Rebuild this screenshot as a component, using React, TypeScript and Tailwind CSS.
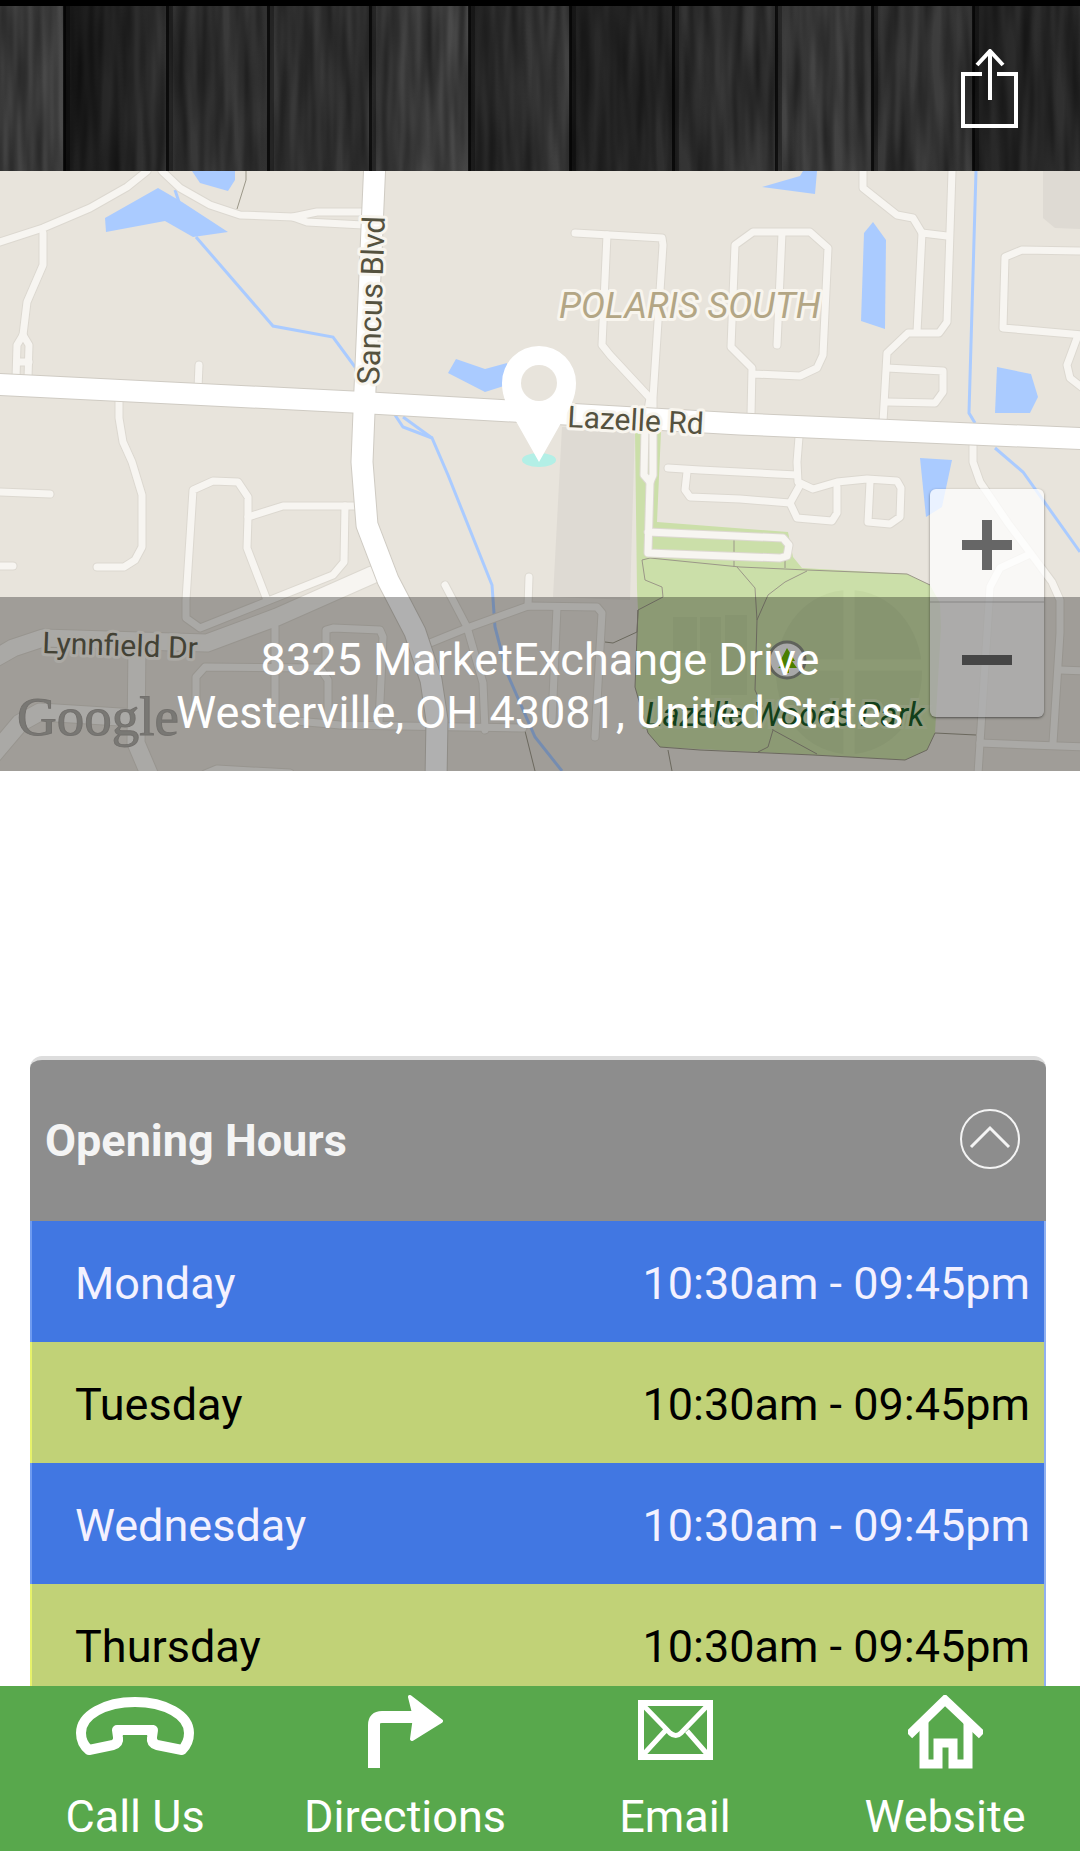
import React from "react";

const planks = [
  { x: 0, w: 64, from: "#444444", to: "#4b4b4b" },
  { x: 64, w: 103, from: "#1c1c1c", to: "#383838" },
  { x: 167, w: 101, from: "#363636", to: "#3d3d3d" },
  { x: 268, w: 102, from: "#383838", to: "#393939" },
  { x: 370, w: 99, from: "#3e3e3e", to: "#4d4d4d" },
  { x: 469, w: 101, from: "#282828", to: "#434343" },
  { x: 570, w: 103, from: "#272727", to: "#303030" },
  { x: 673, w: 103, from: "#333333", to: "#3c3c3c" },
  { x: 776, w: 96, from: "#444444", to: "#424242" },
  { x: 872, w: 101, from: "#383838", to: "#404040" },
  { x: 973, w: 107, from: "#272727", to: "#323232" },
];

function WoodTexture() {
  return (
    <svg className="absolute inset-0 size-full" viewBox="0 0 1080 165" preserveAspectRatio="none" aria-hidden="true">
      <defs>
        {planks.map((p, i) => (
          <linearGradient key={p.x} id={`plank-${i}`}>
            <stop offset="0" stopColor={p.from} />
            <stop offset="1" stopColor={p.to} />
          </linearGradient>
        ))}
        <filter id="grain" x="0" y="0" width="100%" height="100%">
          <feTurbulence type="fractalNoise" baseFrequency="0.09 0.008" numOctaves="2" seed="7" />
          <feColorMatrix values="0 0 0 0 0  0 0 0 0 0  0 0 0 0 0  1.2 0 0 0 -0.35" />
        </filter>
      </defs>
      {planks.map((p, i) => (
        <rect key={p.x} x={p.x} width={p.w} height="165" fill={`url(#plank-${i})`} />
      ))}
      <rect width="1080" height="165" filter="url(#grain)" opacity="0.75" />
      {planks.slice(1).map((p) => (
        <g key={p.x} fill="#000000">
          <rect x={p.x - 1} width="3" height="165" opacity="0.75" />
          <rect x={p.x + 2} width="4" height="165" opacity="0.3" />
        </g>
      ))}
    </svg>
  );
}

const smallRoads = [
  "M0 242 43 228 90 208 127 187 147 171",
  "M162 171 180 188 210 205 240 215 293 217 317 212 363 212",
  "M293 217 307 222 363 225",
  "M43 233 43 265 27 302 23 335 17 345 16 378",
  "M23 335 29 345 28 378",
  "M17 362H29",
  "M199 365 198 388",
  "M119 400V418L123 442 132 462 142 495V547L135 560 124 567H97",
  "M267 600 247 548 248 517V497L238 482 213 481 193 490 186 600V618L200 628 333 575 344 562 345 506",
  "M248 517 283 506H355",
  "M0 492 50 494",
  "M0 566H13",
  "M196 708V677L205 667 320 668 328 680V723",
  "M275 627V720",
  "M326 660V630L333 628 380 630 383 637 379 722",
  "M275 719 340 725 523 728",
  "M205 774 217 769 290 773",
  "M445 585 467 627 483 683 485 730",
  "M430 643 467 628 528 606 597 607 602 613 595 737",
  "M529 577 528 606",
  "M557 607 552 720",
  "M575 233 662 238 663 245 653 398V475L650 482",
  "M607 235 602 345 610 355 650 398 645 428 644 475 650 482 648 553 780 558 787 556 789 545 783 538 648 532",
  "M751 415 752 368 731 347 735 245 753 232H810L828 248 823 355 817 368 800 376 754 374",
  "M782 233 777 345",
  "M863 171V188L897 215 913 218 922 233 917 332",
  "M922 233 947 236",
  "M952 171 947 322 939 333H908L887 353 883 422",
  "M887 368 943 371V392L935 403 887 402",
  "M1084 251 1022 250 1005 257 1003 328 1084 335",
  "M1077 338 1067 365 1070 378 1084 389",
  "M799 437 797 462 798 482 813 489 837 482 867 479 897 481 901 488 900 517 890 524 868 522 870 482",
  "M668 468 700 470 797 475",
  "M837 487V513L832 521 797 518 790 503 800 485",
  "M790 503 740 499 690 497 685 490 687 472",
  "M973 445V462L980 482 1008 523 1052 582 1060 600V633L1053 743",
  "M1028 555 1000 568 990 587 978 774",
  "M1060 670 1084 671",
  "M980 743 1084 747",
];

const wideRoads = [
  "M372 575 277 617 207 643 173 642 43 638 13 648 -8 660",
  "M137 643 136 743 150 776",
  "M136 718 40 712 20 723 -8 756",
];

const majorRoads = [
  "M-10 384 353 402 740 424 1090 439",
  "M375 160 364 412 362 462 367 525 388 580 415 632 431 680 437 720 436 780",
];

const ponds = [
  "M105 218 158 188 182 202 228 232 193 237 165 221 106 232Z",
  "M192 171H235V180L228 191 200 183Z",
  "M456 359 485 369 507 363V385L485 392 448 373Z",
  "M762 187 800 176 803 171H817L815 194Z",
  "M873 222 886 240 885 329 861 321 864 233Z",
  "M997 367 1031 374 1038 397 1030 413H995Z",
  "M920 458 952 460 942 507 926 517Z",
];

const streams = [
  "M175 190 179 202",
  "M196 237 273 326 333 337 355 367",
  "M395 415 403 427 432 438 448 475 492 585 495 627 507 673 535 737 562 771",
  "M403 417 432 438",
  "M976 171 969 413 975 423",
  "M995 448 1023 472 1080 552",
];

const trails = [
  "M246 171V180L237 209",
  "M642 560 650 558 740 567 807 570 907 574 930 585",
  "M605 642 613 643 637 632 638 610 663 597 662 587 645 580 642 560",
  "M734 538V567M785 556V568",
  "M737 567 755 588 757 620 755 690 773 730 768 747 758 752",
  "M807 571 785 582 768 595 757 620",
  "M773 730 817 754",
  "M935 733 976 735",
  "M525 731 535 771",
  "M668 750 672 771",
  "M638 610 635 687 648 733 660 747 700 750 813 755 905 760 927 750 935 733",
];

function MapDrawing() {
  return (
    <svg
      className="absolute inset-0 size-full"
      viewBox="0 171 1080 600"
      preserveAspectRatio="xMidYMid slice"
      fontFamily="Roboto, sans-serif"
      role="img"
      aria-label="Map of Sancus Blvd and Lazelle Rd"
    >
      <rect y="171" width="1080" height="600" fill="#e8e4dc" />
      <path d="M562 427H635L630 600 553 597Z" fill="#dedad3" />
      <path d="M1043 171V218L1055 228 1080 229V171Z" fill="#dedad3" />
      <path
        d="M635 432H661L657 522 788 532 793 557 802 568 907 574 930 585 940 603 941 627 935 733 927 750 905 760 813 755 660 747 648 733 635 687 638 610 637 590Z"
        fill="#cbdfa9"
      />
      <g fill="#c4d8a2">
        <ellipse cx="849" cy="672" rx="73" ry="82" />
        <path d="M673 617H697V653H673ZM700 617H721V653H700ZM725 615H747V695H711V653H725Z" />
      </g>
      <path d="M849 590V754M776 665H922" stroke="#cbdfa9" strokeWidth="11" />
      <g fill="#aacbff">
        {ponds.map((d) => <path key={d} d={d} />)}
      </g>
      <g fill="none" stroke="#aacbff" strokeWidth="3">
        {streams.map((d) => <path key={d} d={d} />)}
      </g>
      <g fill="none" stroke="#9b9788" strokeWidth="1">
        {trails.map((d) => <path key={d} d={d} />)}
      </g>
      <g fill="none" strokeLinecap="round" strokeLinejoin="round">
        <g stroke="#dcd8d0" strokeWidth="9">
          {smallRoads.map((d) => <path key={d} d={d} />)}
        </g>
        <g stroke="#dcd8d0" strokeWidth="19">
          {wideRoads.map((d) => <path key={d} d={d} />)}
        </g>
        <g stroke="#f7f5f1" strokeWidth="7">
          {smallRoads.map((d) => <path key={d} d={d} />)}
        </g>
        <g stroke="#f7f5f1" strokeWidth="17">
          {wideRoads.map((d) => <path key={d} d={d} />)}
        </g>
        <g stroke="#cfcbc3" strokeWidth="23">
          {majorRoads.map((d) => <path key={d} d={d} />)}
        </g>
        <g stroke="#ffffff" strokeWidth="21">
          {majorRoads.map((d) => <path key={d} d={d} />)}
        </g>
      </g>
      <circle cx="787" cy="660" r="18" fill="#f4f4f4" stroke="#8a8e84" strokeWidth="3" />
      <path d="M787 648 779 663H783L778 668H785V673H789V668H797L792 661H795Z" fill="#6cb800" />
      <g stroke="#f8f5ee" strokeWidth="6" strokeLinejoin="round" paintOrder="stroke">
        <text x="559" y="318" fontSize="36" fontStyle="italic" fill="#b3a685">POLARIS SOUTH</text>
        <text transform="translate(379 385) rotate(-88)" fontSize="31" fill="#55523f">Sancus Blvd</text>
        <text transform="translate(567 427) rotate(3)" fontSize="30" fill="#55523f">Lazelle Rd</text>
        <text transform="translate(42 653) rotate(2)" fontSize="30" fill="#62604e">Lynnfield Dr</text>
      </g>
      <text x="645" y="726" fontSize="33" fontStyle="italic" fill="#1b5c26" stroke="#d2e2b6" strokeWidth="6" paintOrder="stroke">
        Lazelle Woods Park
      </text>
      <text x="17" y="735" fontSize="55" fontFamily="'Liberation Serif', serif" fill="#b0aea9" stroke="#a6a39e" strokeWidth="1">
        Google
      </text>
      <ellipse cx="539" cy="460" rx="17" ry="7" fill="#b3efe6" />
      <path
        d="M539 462 517 423C508 408 502 398 502 383A37 37 0 1 1 576 383C576 398 570 408 561 423Z"
        fill="#ffffff"
      />
      <circle cx="539" cy="383" r="18" fill="#e8e4dc" />
    </svg>
  );
}

const hours = [
  { day: "Monday", time: "10:30am - 09:45pm" },
  { day: "Tuesday", time: "10:30am - 09:45pm" },
  { day: "Wednesday", time: "10:30am - 09:45pm" },
  { day: "Thursday", time: "10:30am - 09:45pm" },
];

const actions = [
  {
    label: "Call Us",
    icon: (
      <svg className="h-[75px] w-[120px]" viewBox="0 0 120 75" fill="none" stroke="currentColor" strokeWidth="10" strokeLinejoin="round" aria-hidden="true">
        <path d="M60 7C90 7 114 20 114 38C114 46 111 51 107 55L82 50Q76 48 77 42L78 35H42L43 42Q44 48 38 50L14 55C9 51 6 46 6 38C6 20 30 7 60 7Z" />
      </svg>
    ),
  },
  {
    label: "Directions",
    icon: (
      <svg className="size-[75px]" viewBox="0 0 75 75" fill="none" stroke="currentColor" strokeWidth="12" aria-hidden="true">
        <path d="M6 73V30Q6 22 14 22H50" />
        <path d="M42 2 73 26 44 44 47 22Z" fill="currentColor" strokeWidth="4" strokeLinejoin="round" />
      </svg>
    ),
  },
  {
    label: "Email",
    icon: (
      <svg className="size-[75px]" viewBox="0 0 75 75" fill="none" stroke="currentColor" strokeWidth="6" aria-hidden="true">
        <path d="M3 8H72V62H3Z" />
        <path d="M5 10 32 38Q38 43 43 38L70 10M5 60 27 36M70 60 49 36" strokeWidth="5" />
      </svg>
    ),
  },
  {
    label: "Website",
    icon: (
      <svg className="size-[75px]" viewBox="0 0 75 75" fill="none" stroke="currentColor" strokeWidth="9" aria-hidden="true">
        <path d="M1 40 37 5 74 40" />
        <path d="M16 27V69H30V48H45V69H60V27" />
      </svg>
    ),
  },
];

export default function App() {
  const [open, setOpen] = React.useState(true);
  return (
    <div className="flex h-screen flex-col bg-white font-[Roboto,sans-serif] text-[45px] leading-[53px]">
      <header className="relative flex h-[171px] shrink-0 items-center justify-end border-t-6 border-black bg-neutral-800 pr-[60px]">
        <WoodTexture />
        <button type="button" aria-label="Share" className="relative text-white">
          <svg className="h-20 w-[60px]" viewBox="0 0 60 80" fill="none" stroke="currentColor" strokeWidth="4" aria-hidden="true">
            <path d="M22 25H3V77H56V25H37" />
            <path d="M30 51V2M17 16 30 2 43 16" />
          </svg>
        </button>
      </header>

      <main className="min-h-0 flex-1 overflow-y-auto [scrollbar-width:none]">
        <section className="relative flex h-[600px] flex-col justify-end overflow-hidden">
          <MapDrawing />
          <div className="absolute right-9 bottom-[54px] flex w-[114px] flex-col rounded-md bg-white/75 text-[#666666] shadow-sm shadow-black/40">
            <button type="button" aria-label="Zoom in" className="flex h-[114px] items-center justify-center border-b-2 border-black/10">
              <svg className="size-[50px]" viewBox="0 0 50 50" fill="currentColor" aria-hidden="true">
                <path d="M20 0H30V20H50V30H30V50H20V30H0V20H20Z" />
              </svg>
            </button>
            <button type="button" aria-label="Zoom out" className="flex h-[114px] items-center justify-center">
              <svg className="size-[50px]" viewBox="0 0 50 50" fill="currentColor" aria-hidden="true">
                <path d="M0 20H50V30H0Z" />
              </svg>
            </button>
          </div>
          <address className="relative bg-black/31 pt-9 pb-8 text-center text-white not-italic">
            8325 MarketExchange Drive
            <br />
            Westerville, OH 43081, United States
          </address>
        </section>

        <section className="mt-[285px] mr-[34px] ml-[30px]">
          <h2>
            <button
              type="button"
              aria-expanded={open}
              onClick={() => setOpen(!open)}
              className="flex h-[165px] w-full items-center justify-between rounded-t-xl border-t-4 border-[#dddddd] bg-[#8d8d8d] pr-[26px] pl-[15px] text-left font-bold text-[#f4f4f4]"
            >
              Opening Hours
              <svg className="mb-1 size-[60px]" viewBox="0 0 60 60" fill="none" stroke="currentColor" strokeWidth="2" aria-hidden="true">
                <circle cx="30" cy="30" r="29" />
                <path d="M11 38 30 19 49 38" strokeWidth="3" />
              </svg>
            </button>
          </h2>
          {open && (
            <table className="w-full border-separate border-spacing-0">
              <tbody>
                {hours.map((h) => (
                  <tr key={h.day} className="group h-[121px] odd:bg-[#4177e2] odd:text-[#f3f1ff] even:bg-[#c1d277] even:text-black">
                    <th scope="row" className="border-l-2 border-[#6f9bf0] pt-1 pl-[43px] text-left font-normal group-even:border-[#e6f26a]">
                      {h.day}
                    </th>
                    <td className="border-r-2 border-[#8fb0f0] pt-1 pr-[14px] text-right">{h.time}</td>
                  </tr>
                ))}
              </tbody>
            </table>
          )}
        </section>
      </main>

      <nav className="grid shrink-0 grid-cols-4 bg-[#58a84c] text-white">
        {actions.map((a) => (
          <a key={a.label} href="#" className="flex flex-col items-center gap-5 pt-[9px] pb-2">
            {a.icon}
            {a.label}
          </a>
        ))}
      </nav>
    </div>
  );
}
